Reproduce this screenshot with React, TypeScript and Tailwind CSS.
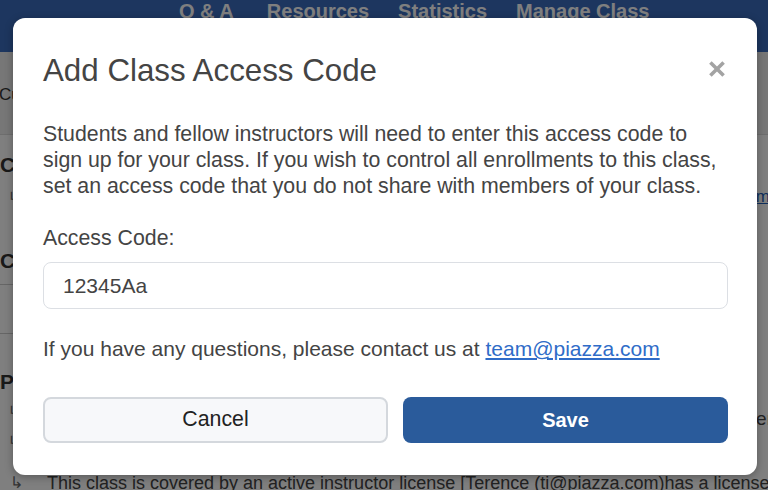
import React from "react";

export default function App() {
  return (
    <div
      className="relative h-[490px] w-[768px] overflow-hidden bg-white text-[#444]"
      style={{ fontFamily: '"Liberation Sans", Arial, sans-serif' }}
    >
      {/* Underlying page */}
      <div className="flex h-[52px] items-start bg-[#3a6cbe] pl-[179px] text-[20px] font-bold leading-[22px] text-white">
        <span>Q &amp; A</span>
        <span className="ml-[33px]">Resources</span>
        <span className="ml-[29px]">Statistics</span>
        <span className="ml-[29px]">Manage Class</span>
      </div>
      <div className="flex h-[83px] items-center border-b border-[#dddddd] bg-[#eeeeee] text-[17px] text-[#333]">
        <span className="ml-[-1px] mt-[4px]">Cu</span>
      </div>
      <div className="flex flex-col text-[#333]">
        <div className="mt-[18px] text-[21px] font-bold leading-[24px]">Cl</div>
        <div className="mt-[10px] flex items-center justify-between text-[14px] leading-[20px]">
          <span className="ml-[8px] text-[#666]">↳</span>
          <span className="mr-[-2px] text-[17px] text-[#1f5fb8] underline">form</span>
        </div>
        <div className="mt-[42px] text-[21px] font-bold leading-[24px]">Co</div>
        <div className="ml-[-20px] mt-[11px] h-[50px] w-[400px] rounded-[8px] border border-[#cccccc] bg-white" />
        <div className="mt-[36px] text-[21px] font-bold leading-[24px]">Pi</div>
        <div className="mt-[7px] flex items-center justify-between text-[14px] leading-[20px]">
          <span className="ml-[8px] text-[#666]">↳</span>
          <span className="relative top-[8px] mr-[-5px] text-[19px] text-[#444]">over</span>
        </div>
        <div className="mt-[10px] flex items-center text-[14px] leading-[20px]">
          <span className="ml-[8px] text-[#666]">↳</span>
        </div>
        <div className="mt-[20px] flex items-center gap-[24px] whitespace-nowrap text-[18px] leading-[24px] text-[#444]">
          <span className="ml-[10px] text-[16px] text-[#666]">↳</span>
          <span>This class is covered by an active instructor license [Terence (ti@piazza.com)has a license</span>
        </div>
      </div>

      {/* Overlay */}
      <div className="absolute inset-0 bg-black/50" />

      {/* Modal */}
      <div className="absolute inset-0 flex items-start pl-[13px] pr-[11px] pt-[18px]">
        <div className="relative flex w-full flex-col rounded-[12px] bg-white pb-[32px] pl-[30px] pr-[29px] pt-[37px] shadow-[0_2px_8px_rgba(0,0,0,0.3)]">
          <div className="flex items-center justify-between">
            <h2 className="text-[31.3px] leading-[32px] text-[#444]">Add Class Access Code</h2>
            <button className="mr-[3px] mt-[-4px] flex h-[16px] w-[16px] items-center justify-center">
              <svg width="17" height="16" viewBox="0 0 17 16">
                <path d="M1.5 1 L15.5 15 M15.5 1 L1.5 15" stroke="#a3a3a3" strokeWidth="3.8" strokeLinecap="butt" />
              </svg>
            </button>
          </div>
          <p className="mt-[34px] whitespace-nowrap text-[21.3px] leading-[26px] text-[#444]">
            Students and fellow instructors will need to enter this access code to
            <br />
            sign up for your class. If you wish to control all enrollments to this class,
            <br />
            set an access code that you do not share with members of your class.
          </p>
          <label className="mt-[26px] text-[21.3px] leading-[26px] text-[#444]">Access Code:</label>
          <div className="mt-[11px] flex h-[47px] items-center rounded-[8px] border border-[#dcdfe4] px-[19px] text-[21px] text-[#444]">
            12345Aa
          </div>
          <p className="mt-[27px] whitespace-nowrap text-[21px] leading-[26px] text-[#444]">
            If you have any questions, please contact us at{" "}
            <a className="text-[#2f6cc8] underline">team@piazza.com</a>
          </p>
          <div className="mt-[35px] flex gap-[15px]">
            <button className="flex h-[46px] w-[345px] items-center justify-center rounded-[8px] border-2 border-[#d4d8dd] bg-[#f7f8fa] text-[21.3px] text-[#222]">
              Cancel
            </button>
            <button className="flex h-[46px] flex-1 items-center justify-center rounded-[8px] bg-[#2a5b9b] text-[20px] font-bold text-white">
              Save
            </button>
          </div>
        </div>
      </div>
    </div>
  );
}
